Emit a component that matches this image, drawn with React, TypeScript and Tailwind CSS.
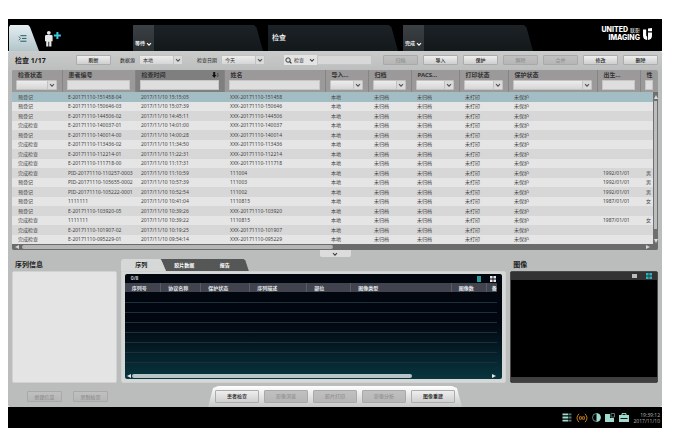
import React from "react";

const CHEVRON = "M1 1.5 3.5 4 6 1.5";

function Chevron({ className = "" }: { className?: string }) {
  return (
    <svg viewBox="0 0 7 5" className={`h-[4px] w-[6px] ${className}`} fill="none" stroke="currentColor" strokeWidth="1.4" aria-hidden="true">
      <path d={CHEVRON} />
    </svg>
  );
}

function Dropdown({ label, value = "", className = "" }: { label: string; value?: string; className?: string }) {
  return (
    <div className={`relative h-[10px] ${className}`}>
      <select
        aria-label={label}
        className="block h-full w-full appearance-none rounded-[1px] border border-[#c2c2c2] bg-linear-to-b from-[#ececec] to-[#d6d6d6] pl-[3px] text-[5px] leading-[8px] text-[#333]"
      >
        <option>{value}</option>
      </select>
      <span className="pointer-events-none absolute inset-y-px right-px flex w-[9px] items-center justify-center border-l border-[#c2c2c2] bg-[#dadada] text-[#555]">
        <Chevron />
      </span>
    </div>
  );
}

function Button({ children, disabled = false, className = "" }: { children: React.ReactNode; disabled?: boolean; className?: string }) {
  return (
    <button
      disabled={disabled}
      className={`flex items-center justify-center rounded-[1px] border border-[#acacac] bg-linear-to-b from-[#eeeeee] to-[#cfcfcf] text-[5px] leading-[6px] font-medium text-[#222] disabled:border-[#a9a9a9] disabled:from-[#bfc0bf] disabled:to-[#b5b6b5] disabled:text-[#929292] ${className}`}
    >
      {children}
    </button>
  );
}

type Column = { title: string; width: string; filter: "text" | "select" };

const COLUMNS: Column[] = [
  { title: "检查状态", width: "w-[50px]", filter: "select" },
  { title: "患者编号", width: "w-[73px]", filter: "text" },
  { title: "检查时间", width: "w-[89px]", filter: "text" },
  { title: "姓名", width: "w-auto", filter: "text" },
  { title: "导入...", width: "w-[43px]", filter: "select" },
  { title: "归档", width: "w-[43px]", filter: "select" },
  { title: "PACS...", width: "w-[48px]", filter: "select" },
  { title: "打印状态", width: "w-[49px]", filter: "select" },
  { title: "保护状态", width: "w-[89px]", filter: "select" },
  { title: "出生...", width: "w-[43px]", filter: "text" },
  { title: "性", width: "w-[13px]", filter: "text" },
];

const STUDIES: string[][] = [
  ["预登记", "E-20171110-151458-04", "2017/11/10 15:15:05", "XXX-20171110-151458", "", ""],
  ["预登记", "E-20171110-150646-03", "2017/11/10 15:07:39", "XXX-20171110-150646", "", ""],
  ["预登记", "E-20171110-144506-02", "2017/11/10 14:45:11", "XXX-20171110-144506", "", ""],
  ["完成检查", "E-20171110-140037-01", "2017/11/10 14:01:00", "XXX-20171110-140037", "", ""],
  ["预登记", "E-20171110-140014-00", "2017/11/10 14:00:28", "XXX-20171110-140014", "", ""],
  ["完成检查", "E-20171110-113436-02", "2017/11/10 11:34:50", "XXX-20171110-113436", "", ""],
  ["完成检查", "E-20171110-112214-01", "2017/11/10 11:22:31", "XXX-20171110-112214", "", ""],
  ["完成检查", "E-20171110-111718-00", "2017/11/10 11:17:31", "XXX-20171110-111718", "", ""],
  ["完成检查", "PID-20171110-110257-0003", "2017/11/10 11:10:59", "111004", "1992/01/01", "男"],
  ["预登记", "PID-20171110-105655-0002", "2017/11/10 10:57:39", "111003", "1992/01/01", "男"],
  ["预登记", "PID-20171110-105222-0001", "2017/11/10 10:52:54", "111002", "1992/01/01", "男"],
  ["预登记", "1111111", "2017/11/10 10:41:04", "1110815", "1987/01/01", "女"],
  ["预登记", "E-20171110-103920-05", "2017/11/10 10:39:26", "XXX-20171110-103920", "", ""],
  ["完成检查", "1111111", "2017/11/10 10:39:22", "1110815", "1987/01/01", "女"],
  ["完成检查", "E-20171110-101907-02", "2017/11/10 10:19:25", "XXX-20171110-101907", "", ""],
  ["完成检查", "E-20171110-095229-01", "2017/11/10 09:54:14", "XXX-20171110-095229", "", ""],
];

const SERIES_COLUMNS = [
  { title: "序列号", width: "w-[36px]" },
  { title: "协议名称", width: "w-[40px]" },
  { title: "保护状态", width: "w-[49px]" },
  { title: "序列描述", width: "w-[57px]" },
  { title: "部位", width: "w-[44px]" },
  { title: "图像类型", width: "w-auto" },
  { title: "图像数", width: "w-[35px]" },
  { title: "备", width: "w-[11px]" },
];

function GridIcon({ className = "" }: { className?: string }) {
  return (
    <svg viewBox="0 0 6 6" className={`h-[6px] w-[6px] ${className}`} fill="currentColor" aria-hidden="true">
      <path d="M0 0h2.6v2.6H0zM3.4 0H6v2.6H3.4zM0 3.4h2.6V6H0zM3.4 3.4H6V6H3.4z" />
    </svg>
  );
}

function WorkflowTab({ label, wide }: { label: string; wide: boolean }) {
  return (
    <div className="h-[26px] w-[130px] bg-linear-to-b from-[#1c2226] to-[#13181b] [clip-path:polygon(0_0,93%_0,95%_10%,100%_100%,0_100%)]">
      {wide ? (
        <button className="flex h-full w-full items-center pl-[4px] text-[7px] leading-[8px] font-medium text-white">{label}</button>
      ) : (
        <button className="flex h-full w-[21px] items-end gap-px bg-linear-to-b from-[#3a4044] to-[#2b3033] pb-[4px] pl-[2px] text-[5px] leading-[7px] font-medium text-white">
          {label}
          <Chevron className="mb-px" />
        </button>
      )}
    </div>
  );
}

function TopBar() {
  return (
    <header className="flex h-[32px] items-end bg-black">
      <button aria-label="列表" className="ml-px flex h-[26px] w-[30px] items-center bg-linear-to-b from-[#e3eef1] to-[#b3c5ca] pl-[9px] text-[#1d5560] [clip-path:polygon(0_8%,4%_0,64%_0,70%_8%,100%_100%,0_100%)]">
        <svg viewBox="0 0 9 8" className="h-[7px] w-[9px]" fill="none" stroke="currentColor" aria-hidden="true">
          <path d="M2 .8h7M4 3.9h5M2 7.1h7" strokeWidth="1.1" />
          <path d="M.3 1.8 2.2 3.9.3 6" strokeWidth=".9" />
        </svg>
      </button>
      <button aria-label="新建患者" className="mb-[4px] ml-[5px] h-[17px] w-[19px]">
        <svg viewBox="0 0 19 17" className="h-full w-full" aria-hidden="true">
          <circle cx="4.8" cy="2.8" r="1.9" fill="#e8e8e8" />
          <path d="M2.200 5.100h5.200q1.200 0 1.200 1.200v4.900H7.400V16.400H5.200v-4.600h-.8v4.600H2.200V11.200H1V6.300q0-1.200 1.200-1.200z" fill="#e8e8e8" />
          <path d="M13.400 2v7M9.900 5.500h7" stroke="#39c8e0" strokeWidth="2" />
        </svg>
      </button>
      <nav className="ml-[70px] flex gap-[5px]">
        <WorkflowTab label="等待" wide={false} />
        <WorkflowTab label="检查" wide />
        <WorkflowTab label="完成" wide={false} />
      </nav>
      <div className="mr-[10px] mb-[9px] ml-auto flex items-center gap-[3px] text-white">
        <div className="text-right font-['Inter','Noto_Sans_CJK_SC',sans-serif] text-[7px] font-extrabold whitespace-nowrap">
          <div className="flex h-[8px] items-center justify-end gap-[2px] leading-[8px]">
            UNITED <span className="text-[5px] leading-[8px] font-normal">联影</span>
          </div>
          <div className="h-[8px] leading-[8px]">IMAGING</div>
        </div>
        <svg viewBox="0 0 9 12" className="h-[12px] w-[9px]" fill="currentColor" aria-hidden="true">
          <path d="M0 1.500h3.200v5.500q0 1.300 1 1.800V12Q0 11.500 0 7.500zM5 4.500H9V7.500q0 4-4 4.500zM5 .5 9 0v3.300H5z" />
        </svg>
      </div>
    </header>
  );
}

function Toolbar() {
  return (
    <div className="flex h-[19px] items-center px-[4px] pb-px text-[5px] leading-[7px] text-[#222]">
      <h1 className="ml-[3px] w-[61px] text-[7px] leading-[9px] font-bold whitespace-nowrap text-[#1a1a1a]">检查 1/17</h1>
      <Button className="h-[10px] w-[35px]">刷新</Button>
      <span className="ml-[9px] w-[19px]">数据源</span>
      <Dropdown label="数据源" value="本地" className="w-[44px]" />
      <span className="ml-[14px] w-[24px]">检查日期</span>
      <Dropdown label="检查日期" value="今天" className="w-[44px]" />
      <div className="ml-[19px] flex h-[10px]">
        <span className="flex w-[9px] items-center justify-center bg-[#e4e4e4]">
          <svg viewBox="0 0 8 8" className="h-[7px] w-[7px]" fill="none" stroke="#222" aria-hidden="true">
            <circle cx="3.500" cy="3.500" r="2.500" />
            <path d="m5.300 5.300 2 2" strokeWidth="1.300" />
          </svg>
        </span>
        <div className="relative w-[24px]">
          <select aria-label="搜索字段" className="block h-full w-full appearance-none bg-[#e4e4e4] pl-px text-[5px] leading-[10px] text-[#333]">
            <option>检查</option>
          </select>
          <Chevron className="pointer-events-none absolute top-[3px] right-[2px] text-[#444]" />
        </div>
        <input aria-label="搜索" className="h-[10px] w-[55px] border border-[#c4c4c4] bg-[#d8d8d8] text-[5px]" />
      </div>
      <div className="ml-auto flex gap-[5px]">
        <Button disabled className="h-[10px] w-[35px]">归档</Button>
        <Button className="h-[10px] w-[35px]">导入</Button>
        <Button className="h-[10px] w-[35px]">保护</Button>
        <Button disabled className="h-[10px] w-[35px]">解除</Button>
        <Button disabled className="h-[10px] w-[35px]">合并</Button>
        <Button className="h-[10px] w-[35px]">修改</Button>
        <Button className="h-[10px] w-[35px]">删除</Button>
      </div>
    </div>
  );
}

function StudyTable() {
  return (
    <section className="mx-[4px] overflow-hidden rounded-[2px] bg-[#999]">
      <div className="flex">
        <table className="min-w-0 flex-1 table-fixed border-collapse text-left">
          <thead>
            <tr className="h-[22px]">
              {COLUMNS.map((c, i) => (
                <th
                  key={c.title + i}
                  className={`${c.width} overflow-hidden border-r border-[#858585] p-0 pr-[5px] pl-[4px] align-top text-[6px] leading-[8px] font-bold whitespace-nowrap text-[#333] last:border-r-0 last:pr-0 ${i === 2 ? "bg-[#7f7f7f]" : "bg-[#9b9999]"}`}
                >
                  <div className="flex h-[10px] items-center justify-between pl-[2px]">
                    {c.title}
                    {i === 2 && (
                      <svg viewBox="0 0 7 6" className="h-[6px] w-[7px]" aria-hidden="true">
                        <path d="M3.200 0v3H4.500L2.200 6 0 3h1.200V0z" fill="#111" />
                        <path d="M5.500 1q1.200 2 0 4" fill="none" stroke="#333" strokeWidth=".7" />
                      </svg>
                    )}
                  </div>
                  {c.filter === "select" ? (
                    <Dropdown label={c.title} />
                  ) : (
                    <input aria-label={c.title} className="block h-[10px] w-full border border-[#c6c6c6] bg-[#dedede] text-[5px]" />
                  )}
                </th>
              ))}
            </tr>
          </thead>
          <tbody className="text-[5px] leading-[9px] text-[#444]">
            {STUDIES.map((r, i) => {
              const cells = [r[0], r[1], r[2], r[3], "本地", "未归档", "未归档", "未打印", "未保护", r[4], r[5]];
              return (
                <tr key={r[1] + i} className={`odd:h-[10px] even:h-[9px] ${i === 0 ? "bg-[#a2bdc3]" : "odd:bg-[#d7d7d7] even:bg-[#e5e5e5]"}`}>
                  {cells.map((t, j) => (
                    <td key={j} className="overflow-hidden p-0 pl-[6px] whitespace-nowrap">
                      {t}
                    </td>
                  ))}
                </tr>
              );
            })}
          </tbody>
        </table>
        <div className="mt-[22px] flex w-[5px] flex-col items-center bg-[#6f6f6f] py-px text-[#ddd]">
          <svg viewBox="0 0 4 4" className="my-[2px] h-[4px] w-[4px]" fill="currentColor" aria-hidden="true">
            <path d="m2 0 2 4H0z" />
          </svg>
          <div className="h-[128px] w-[3px] bg-[#bdbdbd]" />
          <svg viewBox="0 0 4 4" className="mt-auto h-[4px] w-[4px]" fill="currentColor" aria-hidden="true">
            <path d="m2 4 2-4H0z" />
          </svg>
        </div>
      </div>
      <div className="flex h-[6px] items-center justify-between bg-[#6b6b6b] pr-[8px] pl-[3px] text-[#d5d5d5]">
        <svg viewBox="0 0 4 4" className="h-[4px] w-[4px]" fill="currentColor" aria-hidden="true">
          <path d="M4 0v4L0 2z" />
        </svg>
        <div className="mr-auto ml-[3px] h-[4px] w-[49%] rounded-full bg-[#b5b5b5]" />
        <svg viewBox="0 0 4 4" className="h-[4px] w-[4px]" fill="currentColor" aria-hidden="true">
          <path d="M0 0v4l4-2z" />
        </svg>
      </div>
    </section>
  );
}

function SeriesPanel() {
  return (
    <section className="flex flex-col">
      <div className="flex h-[14px] items-end text-[6px] leading-[12px] font-bold">
        <button className="z-10 h-[12px] w-[45px] bg-[#d5d8d7] pr-[4px] text-[#222] [clip-path:polygon(0_20%,4%_0,86%_0,90%_10%,100%_100%,0_100%)]">序列</button>
        <div className="-ml-[5px] flex h-[12px] w-[88px] bg-[#555756] text-white [clip-path:polygon(0_0,94%_0,96%_10%,100%_100%,6%_100%)]">
          <button className="w-[45px] pl-[2px] text-[5px] leading-[12px]">胶片数据</button>
          <button className="w-[38px] text-[5px] leading-[12px]">报告</button>
        </div>
      </div>
      <div className="h-[112px] rounded-r-[2px] rounded-bl-[2px] border border-[#cfd2d1] bg-[#d5d8d7] px-[3px] pt-[2px] pb-[3px]">
        <div className="flex h-full flex-col overflow-hidden rounded-[2px] bg-linear-to-b from-[#02060f] from-45% to-[#07363f] text-[5px] text-[#e4e6e8]">
          <div className="flex h-[9px] items-center pr-[6px] pl-[6px] leading-[7px] font-medium">
            0/8
            <button aria-label="列表视图" className="ml-auto h-[6px] w-[4px] bg-[#2b9a98]" />
            <button aria-label="网格视图" className="ml-[9px]">
              <GridIcon />
            </button>
          </div>
          <div className="mr-[5px]">
            <table className="w-full table-fixed border-collapse text-left">
              <thead>
                <tr className="h-[9px] bg-[#41444f]">
                  {SERIES_COLUMNS.map((c) => (
                    <th key={c.title} className={`${c.width} overflow-hidden border-r border-[#5a5d67] p-0 pl-[7px] leading-[8px] font-bold whitespace-nowrap last:border-r-0 last:pl-[5px]`}>
                      {c.title}
                    </th>
                  ))}
                </tr>
              </thead>
              <tbody>
                {[0, 1, 2, 3, 4, 5, 6].map((n) => (
                  <tr key={n} className="h-[10px] border-b border-[#1d2f3a]">
                    <td colSpan={8} className="p-0" />
                  </tr>
                ))}
              </tbody>
            </table>
          </div>
          <div className="mt-auto flex h-[6px] items-center px-[2px]">
            <svg viewBox="0 0 4 4" className="h-[4px] w-[4px]" fill="currentColor" aria-hidden="true">
              <path d="M4 0v4L0 2z" />
            </svg>
            <div className="ml-px h-[4px] w-[75%] rounded-full bg-[#b7c5c6]" />
            <svg viewBox="0 0 4 4" className="mr-[4px] ml-auto h-[4px] w-[4px]" fill="currentColor" aria-hidden="true">
              <path d="M0 0v4l4-2z" />
            </svg>
          </div>
        </div>
      </div>
    </section>
  );
}

function LowerPanels() {
  return (
    <div className="grid grid-cols-[105fr_386fr_148fr] gap-x-[4px] px-[4px]">
      <section>
        <h2 className="h-[14px] pt-[3px] pl-[3px] text-[7px] leading-[9px] font-bold text-[#222]">序列信息</h2>
        <div className="h-[112px] rounded-[2px] border border-[#d2d2d2] bg-[#e4e4e4]" />
      </section>
      <SeriesPanel />
      <section>
        <h2 className="h-[14px] pt-[3px] pl-[3px] text-[7px] leading-[9px] font-bold text-[#222]">图像</h2>
        <div className="flex h-[112px] flex-col overflow-hidden rounded-[2px] border border-[#4a4a4a] bg-black">
          <div className="flex h-[8px] items-center justify-end gap-[9px] bg-[#333] pr-[5px]">
            <button aria-label="单幅视图" className="h-[4px] w-[5px] bg-[#bdbdbd]" />
            <button aria-label="网格视图" className="flex text-[#25b6c2]">
              <GridIcon className="h-[5px] w-[5px]" />
            </button>
          </div>
          <div className="mt-auto h-[5px] bg-[#404040]" />
        </div>
      </section>
    </div>
  );
}

function ActionBar() {
  return (
    <div className="relative flex h-[24px] items-end justify-center">
      <div className="absolute top-[8px] left-[19px] flex gap-[11px]">
        <Button disabled className="h-[11px] w-[35px]">新建信息</Button>
        <Button disabled className="h-[11px] w-[35px]">复制检查</Button>
      </div>
      <div className="flex h-[21px] w-[254px] items-center justify-center gap-[5px] bg-linear-to-b from-white to-[#c6c8c7] pb-px [clip-path:polygon(0_100%,2%_10%,4%_0,96%_0,98%_10%,100%_100%)]">
        <Button className="h-[13px] w-[44px]">患者检查</Button>
        <Button disabled className="h-[13px] w-[44px]">影像浏览</Button>
        <Button disabled className="h-[13px] w-[44px]">胶片打印</Button>
        <Button disabled className="h-[13px] w-[44px]">影像分析</Button>
        <Button className="h-[13px] w-[44px]">图像重建</Button>
      </div>
    </div>
  );
}

function StatusBar() {
  return (
    <footer className="flex h-[21px] items-center justify-end gap-[4px] bg-black pr-[2px] text-[#9edcd0]">
      <svg viewBox="0 0 10 10" className="h-[9px] w-[10px]" aria-hidden="true">
        <path d="M0 1.500h6.500M0 5h6.500M0 8.500h6.500" stroke="currentColor" strokeWidth="2" />
        <path d="M7 1.500h3M7 5h3M7 8.500h3" stroke="#55776f" strokeWidth="2" />
      </svg>
      <svg viewBox="0 0 12 10" className="h-[10px] w-[12px]" fill="none" stroke="#d98a24" aria-hidden="true">
        <path d="M3 .8Q-1 5 3 9.200M9 .8q4 4.200 0 8.400" strokeWidth=".9" />
        <path d="M4.300 3q-1.500 2 0 4M7.700 3q1.500 2 0 4" />
        <path d="M6 3.500v3" strokeWidth="1.400" />
      </svg>
      <svg viewBox="0 0 9 9" className="h-[9px] w-[9px]" aria-hidden="true">
        <circle cx="4.500" cy="4.500" r="4" fill="none" stroke="currentColor" strokeWidth=".6" />
        <path d="M4.500.3a4.200 4.200 0 0 1 0 8.400z" fill="currentColor" />
      </svg>
      <svg viewBox="0 0 10 9" className="h-[9px] w-[10px]" aria-hidden="true">
        <path d="M0 1h5v4h4v4H0z" fill="currentColor" />
        <path d="M6 .5h3.500v3.500H6z" fill="none" stroke="#55776f" />
      </svg>
      <svg viewBox="0 0 10 9" className="h-[9px] w-[10px]" aria-hidden="true">
        <path d="M3 2V.6h4V2" fill="none" stroke="currentColor" />
        <path d="M0 2h10v7H0z" fill="currentColor" />
        <path d="M1.500 5.500h7" stroke="#111" />
      </svg>
      <div className="text-right font-['Open_Sans',sans-serif] text-[5px] leading-[6px] whitespace-nowrap text-[#b8b8b8]">
        <div>19:39:12</div>
        <div>2017/11/10</div>
      </div>
    </footer>
  );
}

export default function App() {
  return (
    <div className="bg-white pt-[19px] pr-[16px] pb-[11px] pl-[8px] font-['Noto_Sans','Noto_Sans_CJK_SC',sans-serif]">
      <TopBar />
      <main className="rounded-[2px] bg-linear-to-b from-[#c9cccb] to-[#bbbdbc] to-6%">
        <Toolbar />
        <StudyTable />
        <div className="flex h-[7px] justify-center">
          <button aria-label="折叠" className="flex h-[7px] w-[31px] items-center justify-center rounded-b-[2px] bg-[#dcdcdc] text-[#444]">
            <Chevron />
          </button>
        </div>
        <LowerPanels />
        <ActionBar />
      </main>
      <StatusBar />
    </div>
  );
}
